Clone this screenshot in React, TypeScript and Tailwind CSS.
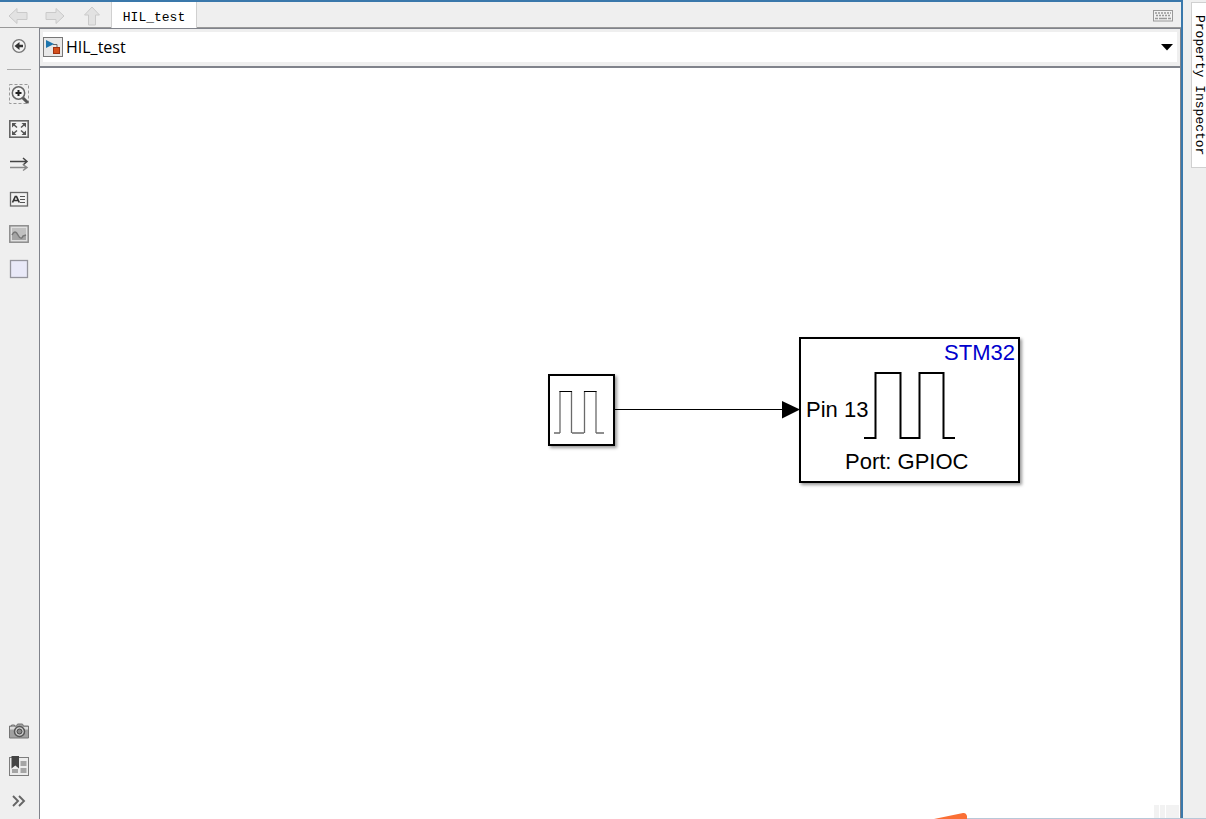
import type { ReactNode } from 'react';

function NavArrow({ turn }: { turn: string }) {
  return (
    <svg viewBox="0 0 20 20" className={`size-5 ${turn}`}>
      <path d="M1 10 9 2.500v4h10v7H9v4Z" fill="#e2e2e2" stroke="#cacaca" />
    </svg>
  );
}

function ToolButton({ label, children }: { label: string; children: ReactNode }) {
  return (
    <button type="button" aria-label={label} className="flex size-5 items-center justify-center">
      <svg viewBox="0 0 20 20" className="size-5" fill="none">
        {children}
      </svg>
    </button>
  );
}

function ViewTools() {
  return (
    <div className="flex flex-col items-center gap-[15px]">
      <ToolButton label="Zoom">
        <rect x=".5" y=".5" width="19" height="19" stroke="#999" strokeDasharray="3 2" />
        <path d="m13 13 5 5" stroke="#555" strokeWidth="3" strokeLinecap="round" />
        <circle cx="9.500" cy="9" r="6.200" fill="#f4f4f4" stroke="#666" strokeWidth="1.500" />
        <path d="M9.500 6v6M6.500 9h6" stroke="#222" strokeWidth="2" />
      </ToolButton>
      <ToolButton label="Fit to view">
        <rect x=".8" y="1.800" width="18.400" height="16.400" fill="#f4f4f4" stroke="#666" strokeWidth="1.600" />
        <path d="M3 8.500V4h4.500ZM12.500 4h4.500v4.500ZM3 11.500v4.500h4.500ZM12.500 16h4.500v-4.500Z" fill="#555" />
        <path d="m4 5 4 3.500M16 5l-4 3.500M4 15l4-3.500M16 15l-4-3.500" stroke="#555" strokeWidth="1.500" />
      </ToolButton>
      <ToolButton label="Sample time">
        <path d="M1 7.500h17M14 4l4 3.500L14 11" stroke="#444" strokeWidth="1.500" />
        <path d="M1 13.500h17M14 10.500l4 3-4 3" stroke="#888" strokeWidth="1.500" />
      </ToolButton>
      <ToolButton label="Annotation">
        <rect x="1.500" y="3.500" width="17" height="13.500" fill="#f2f2f2" stroke="#666" strokeWidth="1.300" />
        <path d="m3.500 13.500 2.800-6h1.200l2.800 6M5 11.500h4" stroke="#333" strokeWidth="1.700" />
        <path d="M11 7.500h5M11 10.500h5M11 13.500h5" stroke="#555" />
      </ToolButton>
      <ToolButton label="Image">
        <rect x=".8" y="1.800" width="18.400" height="16.400" fill="#e0e0e0" stroke="#8c8c8c" strokeWidth="1.500" />
        <rect x="3" y="4" width="14" height="12" fill="#c0c0c0" />
        <path d="M3 11c2-4 4-4 6 0s4 4 5 1l3-1v5H3Z" fill="#a4a4a4" />
        <path d="M3 11c2-4 4-4 6 0s4 4 5 1l3-1" stroke="#777" strokeWidth="1.500" />
      </ToolButton>
      <ToolButton label="Area">
        <rect x="1.500" y="1.500" width="17" height="17" fill="#e9e9f8" stroke="#94949c" strokeWidth="1.300" />
      </ToolButton>
    </div>
  );
}

function ModelTools() {
  return (
    <div className="flex flex-col items-center gap-[15px]">
      <ToolButton label="Screenshot">
        <path d="M.5 5h2V4h3v1h2l1-2h5l1 2h5v12H.5Z" fill="#a0a0a0" stroke="#747474" />
        <path d="M1 6h18v2.500H1Z" fill="#dcdcdc" />
        <circle cx="10.500" cy="10.500" r="5" fill="#d0d0d0" stroke="#555" strokeWidth="1.500" />
        <circle cx="10.500" cy="10.500" r="2.500" fill="#888" stroke="#444" />
      </ToolButton>
      <ToolButton label="Library bookmark">
        <rect x=".5" y="1.500" width="19" height="18" fill="#ececec" stroke="#7c7c7c" />
        <path d="M11.500 5h6v5h-6ZM11.500 12h6v5h-6ZM3 13h6v4H3Z" fill="#a5a5a5" />
        <path d="M2.500 0h7.500v12.500l-3.700-3-3.800 3Z" fill="#444" />
      </ToolButton>
      <ToolButton label="More">
        <path d="m4 5 5 5-5 5M10 5l5 5-5 5" stroke="#666" strokeWidth="1.900" />
      </ToolButton>
    </div>
  );
}

function Diagram() {
  return (
    <main className="relative min-h-0 flex-1 overflow-hidden bg-white font-['Liberation_Sans',sans-serif] text-[22px] leading-6 text-black">
      <svg viewBox="0 0 186 18" className="absolute left-[574px] top-[333px] h-[18px] w-[186px]">
        <path d="M0 8.500h170" stroke="#000" />
        <path d="M168 0v17.500l18-9Z" />
      </svg>
      <div className="absolute left-[508px] top-[306px] h-[72px] w-[67px] border-2 border-black bg-white shadow-[2px_2px_3px_rgba(0,0,0,0.4)]">
        <svg viewBox="0 0 63 68" className="size-full" fill="none">
          <path d="M4 57h6M22 57h12M46 57h8M10 57V15M21.500 57V15M34.500 57V15M46 57V15" stroke="#6a6a6a" strokeWidth="1.300" />
          <path d="M9.500 15.500h12.500M34 15.500h12.500" stroke="#000" />
        </svg>
      </div>
      <div className="absolute left-[759px] top-[269px] h-[146px] w-[221px] border-2 border-black bg-white shadow-[2px_2px_3px_rgba(0,0,0,0.4)]">
        <svg viewBox="0 0 92 70" className="absolute left-[62px] top-[31px] h-[70px] w-[92px]" fill="none">
          <path d="M1 68h11.500V3h25v65H56.500V3h24v65h12" stroke="#000" strokeWidth="2" />
        </svg>
        <span className="absolute right-[3px] top-[2px] text-[#0000cc]">STM32</span>
        <span className="absolute left-[5px] top-[59px] whitespace-nowrap">Pin 13</span>
        <span className="absolute left-[44px] top-[111px] whitespace-nowrap">Port: GPIOC</span>
      </div>
      <svg viewBox="0 0 34 7" className="absolute bottom-0 left-[894px] h-[7px] w-[34px]">
        <path d="M0 7 29 1q3-.5 4 3v3Z" fill="#fa6f35" />
      </svg>
      <div className="absolute bottom-px right-px flex h-[13px] gap-px">
        <span className="w-[5px] bg-[#f2f2f2]" />
        <span className="w-[5px] bg-[#f2f2f2]" />
        <span className="w-[13px] bg-[#f2f2f2]" />
      </div>
    </main>
  );
}

export default function App() {
  return (
    <div className="relative flex h-screen bg-[#efefef] text-black">
      <div className="flex min-w-0 flex-1 flex-col border-r-2 border-t-2 border-[#3a78ab]">
        <header className="flex h-[26px] shrink-0 border-b border-[#999]">
          <nav className="flex w-[111px] items-center gap-[17px] pl-2 pt-[3px]">
            <button type="button" aria-label="Back" className="size-5"><NavArrow turn="" /></button>
            <button type="button" aria-label="Forward" className="size-5"><NavArrow turn="rotate-180" /></button>
            <button type="button" aria-label="Up" className="size-5"><NavArrow turn="rotate-90" /></button>
          </nav>
          <button type="button" className="-mb-px flex w-[86px] items-center justify-center border-x border-[#d0d0d0] bg-white pt-[5px] font-['Liberation_Mono',monospace] text-[13px] leading-5">
            HIL_test
          </button>
          <button type="button" aria-label="Keyboard shortcuts" className="ml-auto mr-2 flex items-center pt-[2px]">
            <svg viewBox="0 0 20 12" className="h-3 w-5" fill="none">
              <rect x=".5" y=".5" width="19" height="10.500" fill="#f2f2f2" stroke="#999" />
              <path d="M2 3h16M3 5.500h15" stroke="#999" strokeWidth="1.500" strokeDasharray="2 1" />
              <path d="M2 8.500h3M6 8.500h8M15 8.500h3" stroke="#999" strokeWidth="1.500" />
            </svg>
          </button>
        </header>
        <div className="flex min-h-0 flex-1">
          <aside className="flex w-[39px] shrink-0 flex-col items-center pb-2 pr-px pt-2">
            <ToolButton label="Hide browser">
              <circle cx="10" cy="10" r="6.300" fill="#f4f4f4" stroke="#777" strokeWidth="1.300" />
              <path d="M9 10h5" stroke="#333" strokeWidth="2.500" />
              <path d="M10.500 6v8l-5-4Z" fill="#333" />
            </ToolButton>
            <div className="mb-[14px] mt-[13px] h-px w-6 shrink-0 bg-[#aaa]" />
            <ViewTools />
            <div className="mt-auto"><ModelTools /></div>
          </aside>
          <div className="flex min-w-0 flex-1 flex-col border-l border-r border-[#80838b]">
            <div className="h-10 shrink-0 border-b-2 border-t border-[#80838b] px-[3px] pb-1 pt-[3px]">
              <div className="flex h-full items-center bg-white">
                <svg viewBox="0 0 20 20" className="size-5 shrink-0" fill="none">
                  <rect x=".5" y=".5" width="19" height="19" fill="#e8e8e8" stroke="#777" />
                  <path d="M10 7.500h4v3" stroke="#666" />
                  <path d="M3 3v8l8-4Z" fill="#1d75ad" />
                  <rect x="10.500" y="10.500" width="6" height="6" fill="#d4501d" stroke="#a03210" />
                </svg>
                <span className="ml-[3px] flex-1 font-['Open_Sans',sans-serif] text-[16px] leading-5">HIL_test</span>
                <button type="button" aria-label="Open model list" className="mr-1 flex items-center">
                  <svg viewBox="0 0 12 7" className="h-[7px] w-3"><path d="M0 0h12L6 6.500Z" /></svg>
                </button>
              </div>
            </div>
            <Diagram />
          </div>
        </div>
      </div>
      <aside className="w-[23px] shrink-0 pl-2 pt-[2px]">
        <button type="button" className="flex h-[166px] w-full items-center justify-center border-b border-l border-t border-[#d0d0d0] bg-white font-['Liberation_Mono',monospace] text-[13px] leading-[14px] [writing-mode:vertical-rl]">
          Property Inspector
        </button>
      </aside>
      <div className="absolute bottom-0 left-[967px] right-0 h-px bg-[#b8c8d8]" />
    </div>
  );
}
